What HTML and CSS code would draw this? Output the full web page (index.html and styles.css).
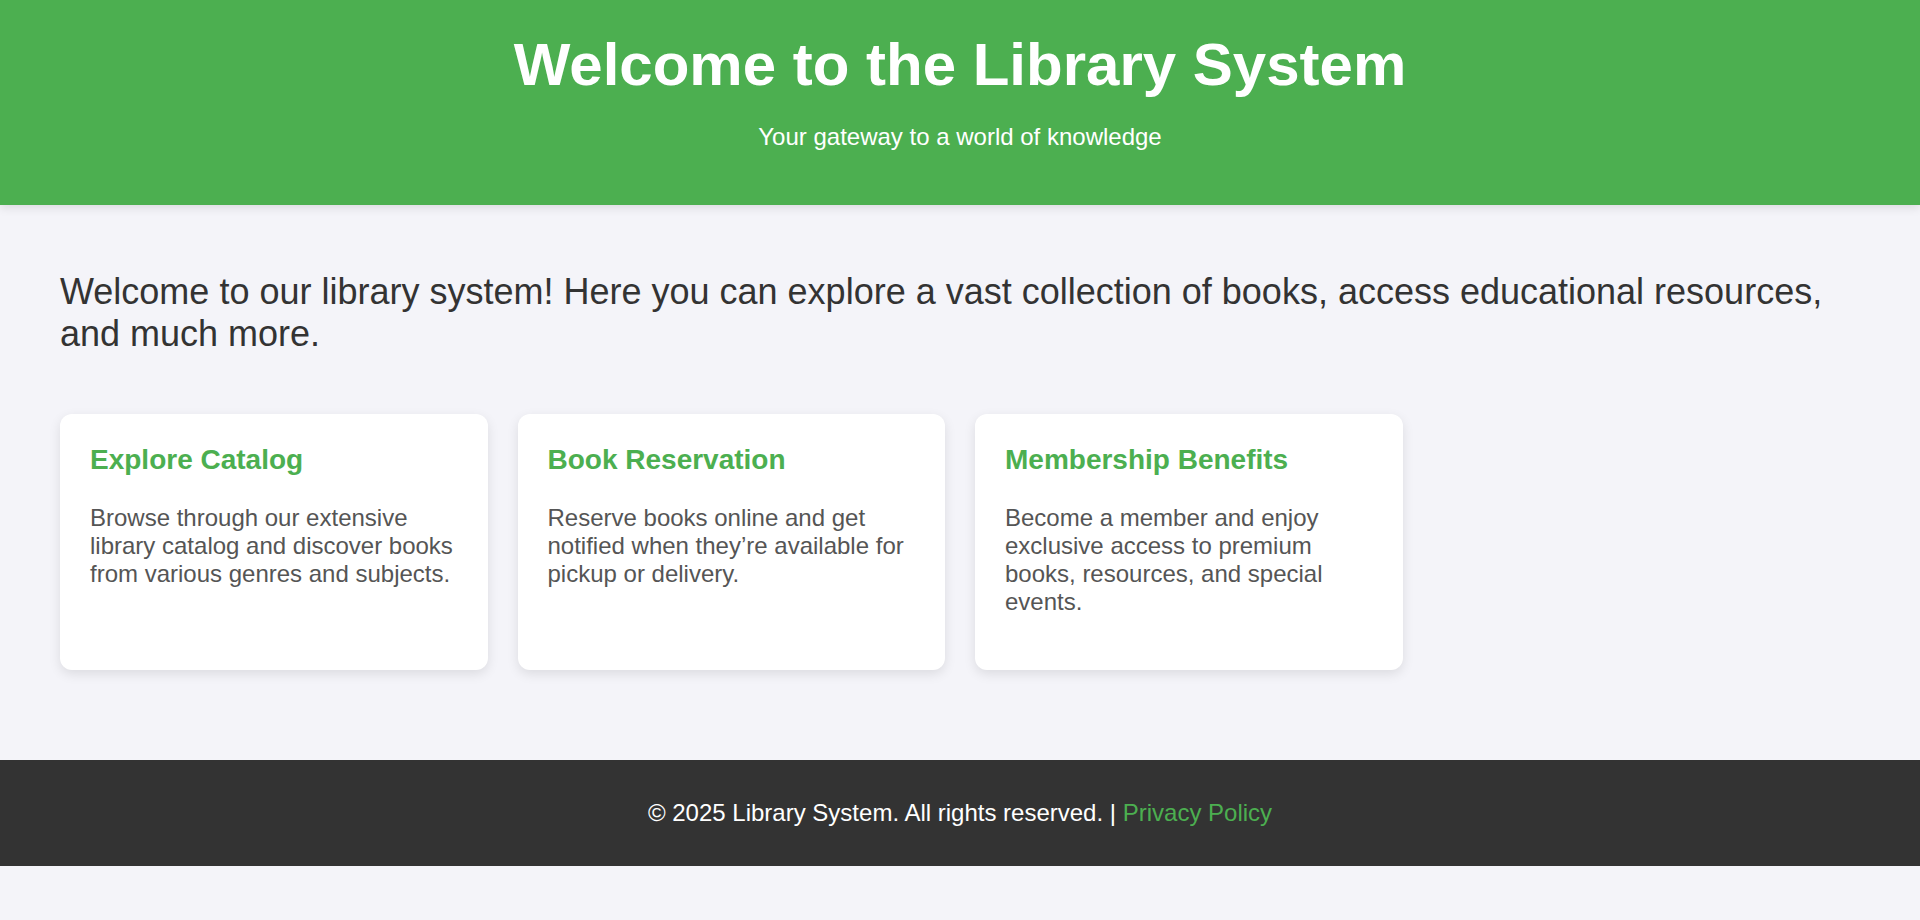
FILE: index.html
```html
<!DOCTYPE html>
<html lang="en">
<head>
<meta charset="UTF-8">
<title>Library System</title>
<link rel="stylesheet" href="styles.css">
</head>
<body>
<header class="site-header">
  <h1 class="site-title">Welcome to the Library System</h1>
  <p class="site-tagline">Your gateway to a world of knowledge</p>
</header>
<main class="main">
  <p class="intro">Welcome to our library system! Here you can explore a vast collection of books, access educational resources, and much more.</p>
  <div class="cards">
    <div class="card">
      <h3 class="card-title">Explore Catalog</h3>
      <p class="card-text">Browse through our extensive library catalog and discover books from various genres and subjects.</p>
    </div>
    <div class="card">
      <h3 class="card-title">Book Reservation</h3>
      <p class="card-text">Reserve books online and get notified when they’re available for pickup or delivery.</p>
    </div>
    <div class="card">
      <h3 class="card-title">Membership Benefits</h3>
      <p class="card-text">Become a member and enjoy exclusive access to premium books, resources, and special events.</p>
    </div>
  </div>
</main>
<footer class="site-footer">
  <p class="footer-text">© 2025 Library System. All rights reserved. | <a class="footer-link" href="#">Privacy Policy</a></p>
</footer>
</body>
</html>
```

FILE: styles.css
```css
html, body {
  margin: 0;
  padding: 0;
}
body {
  font-family: "Liberation Sans", Arial, sans-serif;
  font-size: 24px;
  background: #f4f4f9;
  color: #333333;
}
.site-header {
  background: #4caf50;
  color: #ffffff;
  text-align: center;
  padding: 30px;
  box-shadow: 0 3px 9px rgba(0, 0, 0, 0.1);
  position: relative;
}
.site-title {
  margin: 0;
  font-size: 60px;
  font-weight: bold;
}
.site-tagline {
  margin: 24px 0;
  font-size: 24px;
}
.main {
  padding: 30px 60px;
}
.intro {
  font-size: 36px;
  margin: 36px 0;
  color: #333333;
}
.cards {
  display: grid;
  grid-template-columns: repeat(auto-fill, minmax(400px, 1fr));
  gap: 30px;
  margin: 59px 0 60px;
}
.card {
  background: #ffffff;
  border-radius: 12px;
  padding: 30px;
  box-shadow: 0 4px 12px rgba(0, 0, 0, 0.1);
}
.card-title {
  margin: 0 0 28px;
  font-size: 28px;
  color: #4caf50;
}
.card-text {
  margin: 24px 0;
  color: #555555;
  font-size: 24px;
}
.site-footer {
  background: #333333;
  color: #ffffff;
  text-align: center;
  padding: 15px;
}
.footer-text {
  margin: 24px 0;
}
.footer-link {
  color: #4caf50;
  text-decoration: none;
}
```
